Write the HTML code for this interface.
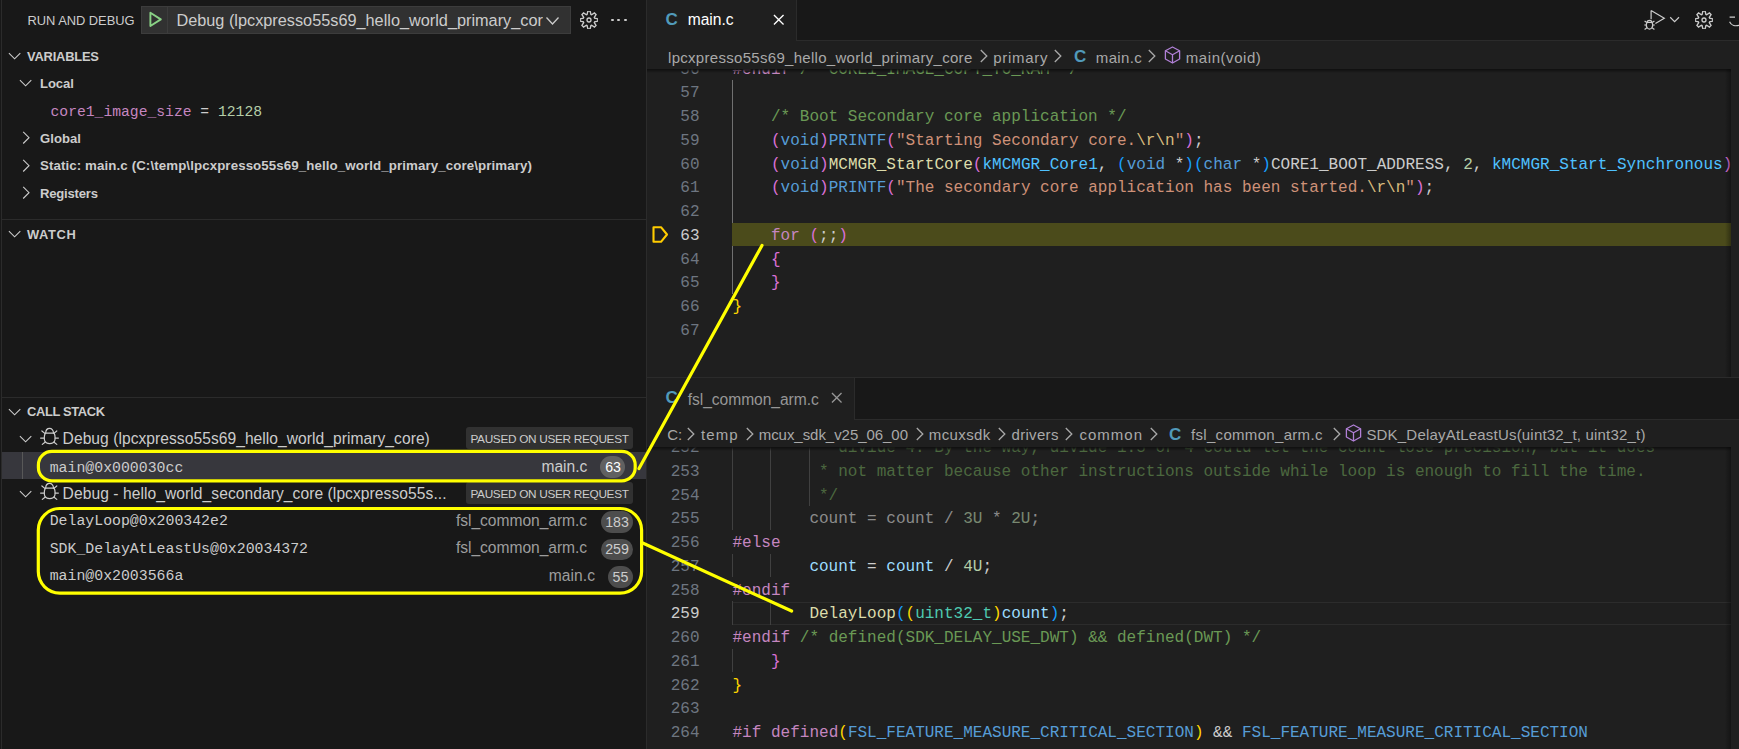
<!DOCTYPE html><html><head><meta charset="utf-8"><style>
*{margin:0;padding:0;box-sizing:border-box}
html,body{width:1739px;height:749px;overflow:hidden;background:#181818}
body{position:relative;font-family:"Liberation Sans",sans-serif;color:#cccccc}
.a{position:absolute;white-space:pre;line-height:normal}
.mono{font-family:"Liberation Mono",monospace}
.hb{font-weight:bold;font-size:12.6px}
.sc{font-weight:bold;font-size:12.6px}
.row{font-size:15.2px;letter-spacing:0.25px}
.code{position:absolute;left:0;font-family:"Liberation Mono",monospace;font-size:16.03px;line-height:23.75px;white-space:pre;color:#cccccc}
.c{color:#6a9955}.k{color:#c586c0}.s{color:#569cd6}.f{color:#dcdcaa}.st{color:#ce9178}.e{color:#d7ba7d}
.v{color:#9cdcfe}.en{color:#4fc1ff}.n{color:#b5cea8}.t{color:#4ec9b0}.b1{color:#ffd700}.b2{color:#da70d6}.b3{color:#179fff}.o{color:#d4d4d4}
.ln{position:absolute;left:0;width:52px;text-align:right;font-family:"Liberation Mono",monospace;font-size:16.03px;line-height:23.75px;color:#6e7681}
.bc{position:absolute;font-size:15.4px;color:#a9a9a9;white-space:pre;line-height:normal}
.badge{position:absolute;background:#313131;border-radius:3px;font-size:12.6px;color:#cccccc;text-align:center}
.cnt{position:absolute;background:#4d4d4d;border-radius:11px;font-size:14px;color:#cccccc;text-align:center}
.fn{position:absolute;font-size:15.2px;color:#9d9d9d;white-space:pre;line-height:normal}
.ig{position:absolute;width:1px;background:#404040}
</style></head><body>
<div class="a" style="left:1px;top:0;width:1px;height:749px;background:#2b2b2b"></div>
<div class="a" style="left:27.50px;top:13.03px;font-size:12.9px;letter-spacing:-0.033px;">RUN AND DEBUG</div>
<div class="a" style="left:141px;top:6px;width:430px;height:28px;background:#313131;border:1px solid #3c3c3c"></div>
<div class="a" style="left:167px;top:7px;width:1px;height:26px;background:#3c3c3c"></div>
<svg class="a" style="left:0;top:0" width="200" height="40" viewBox="0 0 200 40"><path d="M150.4 12.8 L160.8 19.4 L150.4 26 Z" fill="none" stroke="#89d185" stroke-width="1.9" stroke-linejoin="round"/></svg>
<div class="a" style="left:141px;top:0;width:402px;height:40px;overflow:hidden"><div class="a" style="left:35.40px;top:10.90px;font-size:16.3px;">Debug (lpcxpresso55s69_hello_world_primary_core)</div></div>
<svg class="a" style="left:545px;top:16px" width="16" height="10" viewBox="0 0 16 10"><path d="M1.5 1.5 L7.5 8 L13.5 1.5" fill="none" stroke="#cccccc" stroke-width="1.3"/></svg>
<svg class="a" style="left:579.6px;top:10.9px" width="18" height="18" viewBox="0 0 18 18"><path d="M7.09,3.42 L7.85,0.18 L10.15,0.18 L10.91,3.42 L11.59,3.70 L14.42,1.94 L16.06,3.58 L14.30,6.41 L14.58,7.09 L17.82,7.85 L17.82,10.15 L14.58,10.91 L14.30,11.59 L16.06,14.42 L14.42,16.06 L11.59,14.30 L10.91,14.58 L10.15,17.82 L7.85,17.82 L7.09,14.58 L6.41,14.30 L3.58,16.06 L1.94,14.42 L3.70,11.59 L3.42,10.91 L0.18,10.15 L0.18,7.85 L3.42,7.09 L3.70,6.41 L1.94,3.58 L3.58,1.94 L6.41,3.70 Z" fill="none" stroke="#cccccc" stroke-width="1.35" stroke-linejoin="miter"/><circle cx="9" cy="9" r="2.0" fill="none" stroke="#cccccc" stroke-width="1.3"/></svg>
<div class="a" style="left:610.8px;top:18.5px;width:2.8px;height:2.8px;border-radius:1.5px;background:#cccccc"></div>
<div class="a" style="left:617.3px;top:18.5px;width:2.8px;height:2.8px;border-radius:1.5px;background:#cccccc"></div>
<div class="a" style="left:623.8px;top:18.5px;width:2.8px;height:2.8px;border-radius:1.5px;background:#cccccc"></div>
<svg class="a" style="left:8px;top:52px" width="14" height="8" viewBox="0 0 14 8"><path d="M0.9 1.1 L6.6 6.8 L12.3 1.1" fill="none" stroke="#cccccc" stroke-width="1.1"/></svg>
<div class="a" style="left:27.00px;top:49.13px;font-size:12.9px;font-weight:bold;letter-spacing:-0.200px;">VARIABLES</div>
<svg class="a" style="left:19px;top:79px" width="14" height="8" viewBox="0 0 14 8"><path d="M0.9 1.1 L6.6 6.8 L12.3 1.1" fill="none" stroke="#cccccc" stroke-width="1.1"/></svg>
<div class="a" style="left:40.00px;top:75.95px;font-size:13.1px;font-weight:bold;letter-spacing:-0.100px;">Local</div>
<div class="a mono" style="left:50.5px;top:104px;font-size:14.7px"><span style="color:#c586c0">core1_image_size</span> = <span style="color:#b5cea8">12128</span></div>
<svg class="a" style="left:22px;top:131px" width="8" height="14" viewBox="0 0 8 14"><path d="M1.2 0.9 L7 6.7 L1.2 12.5" fill="none" stroke="#cccccc" stroke-width="1.1"/></svg>
<div class="a" style="left:40.00px;top:130.95px;font-size:13.1px;font-weight:bold;letter-spacing:0.040px;">Global</div>
<svg class="a" style="left:22px;top:159px" width="8" height="14" viewBox="0 0 8 14"><path d="M1.2 0.9 L7 6.7 L1.2 12.5" fill="none" stroke="#cccccc" stroke-width="1.1"/></svg>
<div class="a" style="left:40.00px;top:158.46px;font-size:13.3px;font-weight:bold;letter-spacing:0.099px;">Static: main.c (C:\temp\lpcxpresso55s69_hello_world_primary_core\primary)</div>
<svg class="a" style="left:22px;top:186px" width="8" height="14" viewBox="0 0 8 14"><path d="M1.2 0.9 L7 6.7 L1.2 12.5" fill="none" stroke="#cccccc" stroke-width="1.1"/></svg>
<div class="a" style="left:40.00px;top:185.65px;font-size:13.1px;font-weight:bold;letter-spacing:-0.213px;">Registers</div>
<div class="a" style="left:2px;top:219px;width:644px;height:1px;background:#2b2b2b"></div>
<svg class="a" style="left:8px;top:230px" width="14" height="8" viewBox="0 0 14 8"><path d="M0.9 1.1 L6.6 6.8 L12.3 1.1" fill="none" stroke="#cccccc" stroke-width="1.1"/></svg>
<div class="a" style="left:27.00px;top:226.93px;font-size:12.9px;font-weight:bold;letter-spacing:0.600px;">WATCH</div>
<div class="a" style="left:2px;top:397px;width:644px;height:1px;background:#2b2b2b"></div>
<svg class="a" style="left:8px;top:408px" width="14" height="8" viewBox="0 0 14 8"><path d="M0.9 1.1 L6.6 6.8 L12.3 1.1" fill="none" stroke="#cccccc" stroke-width="1.1"/></svg>
<div class="a" style="left:27.00px;top:403.53px;font-size:12.9px;font-weight:bold;letter-spacing:-0.356px;">CALL STACK</div>
<svg class="a" style="left:19px;top:435px" width="14" height="8" viewBox="0 0 14 8"><path d="M0.9 1.1 L6.6 6.8 L12.3 1.1" fill="none" stroke="#cccccc" stroke-width="1.1"/></svg>
<svg class="a" style="left:36px;top:424px" width="28" height="24" viewBox="0 0 28 24"><g fill="none" stroke="#cccccc" stroke-width="1.2" stroke-linecap="round"><path d="M9.7 9.1 C9.7 2.9 17.5 2.9 17.5 9.1"/><path d="M9.3 9.1 L18.1 9.1 C19.4 11.5 19.4 16 18.3 17.6 C17 20.3 10.4 20.3 9.1 17.6 C8 16 8 11.5 9.3 9.1 Z"/><path d="M5.9 7 L8.8 9.4 M20.8 7 L17.9 9.4 M4.6 14.1 L8.3 14.1 M19.1 14.1 L22.4 14.1 M6.3 20.4 L9.0 18.2 M20.8 20.4 L18.1 18.2"/></g></svg>
<div class="a" style="left:62.60px;top:429.55px;font-size:15.6px;letter-spacing:0.049px;">Debug (lpcxpresso55s69_hello_world_primary_core)</div>
<div class="badge" style="left:466px;top:427px;width:167px;height:22px"></div>
<div class="a" style="left:470.40px;top:432.14px;font-size:11.8px;letter-spacing:-0.305px;">PAUSED ON USER REQUEST</div>
<div class="a" style="left:2px;top:452px;width:644px;height:27.2px;background:#37373d"></div>
<div class="a" style="left:22px;top:452px;width:1px;height:27.2px;background:#585858"></div>
<div class="a mono" style="left:49.7px;top:459.5px;font-size:14.85px">main@0x000030cc</div>
<div class="a" style="left:541.50px;top:457.75px;font-size:15.6px;letter-spacing:-0.040px;color:#cccccc;">main.c</div>
<div class="cnt" style="left:600px;top:455.6px;width:25px;height:22.4px;background:#616161"></div>
<div class="a" style="left:605.2px;top:458.7px;font-size:14.2px;color:#ffffff">63</div>
<svg class="a" style="left:19px;top:490px" width="14" height="8" viewBox="0 0 14 8"><path d="M0.9 1.1 L6.6 6.8 L12.3 1.1" fill="none" stroke="#cccccc" stroke-width="1.1"/></svg>
<svg class="a" style="left:36px;top:479px" width="28" height="24" viewBox="0 0 28 24"><g fill="none" stroke="#cccccc" stroke-width="1.2" stroke-linecap="round"><path d="M9.7 9.1 C9.7 2.9 17.5 2.9 17.5 9.1"/><path d="M9.3 9.1 L18.1 9.1 C19.4 11.5 19.4 16 18.3 17.6 C17 20.3 10.4 20.3 9.1 17.6 C8 16 8 11.5 9.3 9.1 Z"/><path d="M5.9 7 L8.8 9.4 M20.8 7 L17.9 9.4 M4.6 14.1 L8.3 14.1 M19.1 14.1 L22.4 14.1 M6.3 20.4 L9.0 18.2 M20.8 20.4 L18.1 18.2"/></g></svg>
<div class="a" style="left:62.60px;top:484.55px;font-size:15.6px;letter-spacing:0.067px;">Debug - hello_world_secondary_core (lpcxpresso55s...</div>
<div class="badge" style="left:466px;top:482px;width:167px;height:22px"></div>
<div class="a" style="left:470.40px;top:487.14px;font-size:11.8px;letter-spacing:-0.305px;">PAUSED ON USER REQUEST</div>
<div class="a mono" style="left:49.7px;top:513.4px;font-size:14.85px">DelayLoop@0x200342e2</div>
<div class="a" style="left:456.00px;top:511.65px;font-size:15.6px;letter-spacing:-0.040px;color:#9d9d9d;">fsl_common_arm.c</div>
<div class="cnt" style="left:601px;top:511.3px;width:32px;height:21.5px"></div>
<div class="a" style="left:601px;width:32px;text-align:center;top:513.8px;font-size:14.2px">183</div>
<div class="a mono" style="left:49.7px;top:540.9px;font-size:14.85px">SDK_DelayAtLeastUs@0x20034372</div>
<div class="a" style="left:456.00px;top:539.15px;font-size:15.6px;letter-spacing:-0.040px;color:#9d9d9d;">fsl_common_arm.c</div>
<div class="cnt" style="left:601px;top:538.8px;width:32px;height:21.5px"></div>
<div class="a" style="left:601px;width:32px;text-align:center;top:541.3px;font-size:14.2px">259</div>
<div class="a mono" style="left:49.7px;top:568.4px;font-size:14.85px">main@0x2003566a</div>
<div class="a" style="left:548.80px;top:566.65px;font-size:15.6px;letter-spacing:0.060px;color:#9d9d9d;">main.c</div>
<div class="cnt" style="left:608px;top:566.3px;width:25px;height:21.5px"></div>
<div class="a" style="left:608px;width:25px;text-align:center;top:568.8px;font-size:14.2px">55</div>
<div class="a" style="left:646px;top:0;width:1px;height:749px;background:#2b2b2b"></div>
<div class="a" style="left:647px;top:0;width:1092px;height:749px;background:#1f1f1f"></div>
<div class="a" style="left:647px;top:0px;width:1092px;height:40px;background:#181818"></div>
<div class="a" style="left:647px;top:40px;width:1092px;height:1px;background:#2b2b2b"></div>
<div class="a" style="left:647px;top:0px;width:149px;height:41px;background:#1f1f1f"></div>
<div class="a" style="left:796px;top:0px;width:1px;height:40px;background:#2b2b2b"></div>
<div class="a" style="left:665.5px;top:9.5px;font-size:17px;font-weight:bold;color:#519aba">C</div>
<div class="a" style="left:687.70px;top:11.45px;font-size:15.6px;color:#ffffff;">main.c</div>
<svg class="a" style="left:773px;top:14px" width="11.5" height="11.5" viewBox="0 0 12 12"><path d="M1 1 L11 11 M11 1 L1 11" fill="none" stroke="#ffffff" stroke-width="1.4"/></svg>
<div class="a" style="left:732px;top:222.65px;width:999px;height:23.75px;background:#4b4b1b"></div>
<div class="ig" style="left:732px;top:80.15px;height:142.50px;background:#707070"></div>
<div class="ig" style="left:732px;top:246.40px;height:47.50px;background:#707070"></div>
<div class="a" style="left:647px;top:69px;width:1084px;height:308px;overflow:hidden">
<div class="ln" style="top:-10.40px;width:52.5px;color:#6e7681">56</div>
<div class="code" style="left:85.5px;top:-10.40px"><span class="k">#endif</span> <span class="c">/* CORE1_IMAGE_COPY_TO_RAM */</span></div>
<div class="ln" style="top:13.35px;width:52.5px;color:#6e7681">57</div>
<div class="code" style="left:85.5px;top:13.35px"></div>
<div class="ln" style="top:37.10px;width:52.5px;color:#6e7681">58</div>
<div class="code" style="left:85.5px;top:37.10px">    <span class="c">/* Boot Secondary core application */</span></div>
<div class="ln" style="top:60.85px;width:52.5px;color:#6e7681">59</div>
<div class="code" style="left:85.5px;top:60.85px">    <span class="b2">(</span><span class="s">void</span><span class="b2">)</span><span class="s">PRINTF</span><span class="b2">(</span><span class="st">"Starting Secondary core.</span><span class="e">\r\n</span><span class="st">"</span><span class="b2">)</span>;</div>
<div class="ln" style="top:84.60px;width:52.5px;color:#6e7681">60</div>
<div class="code" style="left:85.5px;top:84.60px">    <span class="b2">(</span><span class="s">void</span><span class="b2">)</span><span class="f">MCMGR_StartCore</span><span class="b2">(</span><span class="en">kMCMGR_Core1</span>, <span class="b3">(</span><span class="s">void</span> *<span class="b3">)</span><span class="b3">(</span><span class="s">char</span> *<span class="b3">)</span>CORE1_BOOT_ADDRESS, <span class="n">2</span>, <span class="en">kMCMGR_Start_Synchronous</span><span class="b2">)</span>;</div>
<div class="ln" style="top:108.35px;width:52.5px;color:#6e7681">61</div>
<div class="code" style="left:85.5px;top:108.35px">    <span class="b2">(</span><span class="s">void</span><span class="b2">)</span><span class="s">PRINTF</span><span class="b2">(</span><span class="st">"The secondary core application has been started.</span><span class="e">\r\n</span><span class="st">"</span><span class="b2">)</span>;</div>
<div class="ln" style="top:132.10px;width:52.5px;color:#6e7681">62</div>
<div class="code" style="left:85.5px;top:132.10px"></div>
<div class="ln" style="top:155.85px;width:52.5px;color:#cccccc">63</div>
<div class="code" style="left:85.5px;top:155.85px">    <span class="k">for</span> <span class="b2">(</span>;;<span class="b2">)</span></div>
<div class="ln" style="top:179.60px;width:52.5px;color:#6e7681">64</div>
<div class="code" style="left:85.5px;top:179.60px">    <span class="b2">{</span></div>
<div class="ln" style="top:203.35px;width:52.5px;color:#6e7681">65</div>
<div class="code" style="left:85.5px;top:203.35px">    <span class="b2">}</span></div>
<div class="ln" style="top:227.10px;width:52.5px;color:#6e7681">66</div>
<div class="code" style="left:85.5px;top:227.10px"><span class="b1">}</span></div>
<div class="ln" style="top:250.85px;width:52.5px;color:#6e7681">67</div>
<div class="code" style="left:85.5px;top:250.85px"></div>
</div>
<svg class="a" style="left:651px;top:224.5px" width="19" height="19" viewBox="0 0 19 19"><path d="M2.5 2.2 L10 2.2 L16 9.5 L10 16.8 L2.5 16.8 Z" fill="none" stroke="#ffcc00" stroke-width="2.1" stroke-linejoin="round"/></svg>
<div class="a" style="left:668.00px;top:48.50px;font-size:15.0px;letter-spacing:0.297px;color:#a9a9a9;">lpcxpresso55s69_hello_world_primary_core</div>
<svg class="a" style="left:979.5px;top:49px" width="8" height="14" viewBox="0 0 8 14"><path d="M0.8 1 L6.8 7 L0.8 13" fill="none" stroke="#a9a9a9" stroke-width="1.3"/></svg>
<div class="a" style="left:993.30px;top:48.50px;font-size:15.0px;letter-spacing:0.700px;color:#a9a9a9;">primary</div>
<svg class="a" style="left:1054px;top:49px" width="8" height="14" viewBox="0 0 8 14"><path d="M0.8 1 L6.8 7 L0.8 13" fill="none" stroke="#a9a9a9" stroke-width="1.3"/></svg>
<div class="a" style="left:1074px;top:46.5px;font-size:17px;font-weight:bold;color:#519aba">C</div>
<div class="a" style="left:1095.80px;top:48.50px;font-size:15.0px;letter-spacing:0.340px;color:#a9a9a9;">main.c</div>
<svg class="a" style="left:1148.3px;top:49px" width="8" height="14" viewBox="0 0 8 14"><path d="M0.8 1 L6.8 7 L0.8 13" fill="none" stroke="#a9a9a9" stroke-width="1.3"/></svg>
<svg class="a" style="left:1163.5px;top:45.5px" width="17" height="18" viewBox="0 0 17 18"><g fill="none" stroke="#b180d7" stroke-width="1.3" stroke-linejoin="round"><path d="M8.5 1 L15.6 4.8 L15.6 13 L8.5 17 L1.4 13 L1.4 4.8 Z"/><path d="M1.4 4.8 L8.5 8.8 L15.6 4.8 M8.5 8.8 L8.5 17"/></g></svg>
<div class="a" style="left:1185.80px;top:48.50px;font-size:15.0px;letter-spacing:0.556px;color:#a9a9a9;">main(void)</div>
<div class="a" style="left:647px;top:69px;width:1084px;height:4px;background:linear-gradient(#0f0f0f,rgba(31,31,31,0))"></div>
<div class="a" style="left:647px;top:377px;width:1092px;height:1px;background:#2b2b2b"></div>
<div class="a" style="left:647px;top:378px;width:1092px;height:41px;background:#181818"></div>
<div class="a" style="left:647px;top:419px;width:1092px;height:1px;background:#2b2b2b"></div>
<div class="a" style="left:647px;top:378px;width:207px;height:42px;background:#1f1f1f"></div>
<div class="a" style="left:854px;top:378px;width:1px;height:41px;background:#2b2b2b"></div>
<div class="a" style="left:665.5px;top:387.5px;font-size:17px;font-weight:bold;color:#519aba">C</div>
<div class="a" style="left:687.70px;top:391.05px;font-size:15.6px;letter-spacing:-0.040px;color:#969696;">fsl_common_arm.c</div>
<svg class="a" style="left:830.5px;top:392px" width="11.5" height="11.5" viewBox="0 0 12 12"><path d="M1 1 L11 11 M11 1 L1 11" fill="none" stroke="#969696" stroke-width="1.4"/></svg>
<div class="a" style="left:732px;top:602.1px;width:999px;height:22.6px;border-top:1.4px solid #2c2c2c;border-bottom:1.4px solid #2c2c2c"></div>
<div class="ig" style="left:732px;top:447px;height:82.90px"></div>
<div class="ig" style="left:770px;top:447px;height:82.90px"></div>
<div class="ig" style="left:809px;top:447px;height:59.15px"></div>
<div class="ig" style="left:732px;top:553.65px;height:23.75px"></div>
<div class="ig" style="left:770px;top:553.65px;height:23.75px"></div>
<div class="ig" style="left:732px;top:601.15px;height:23.75px"></div>
<div class="ig" style="left:770px;top:601.15px;height:23.75px"></div>
<div class="ig" style="left:732px;top:648.65px;height:23.75px"></div>
<div class="a" style="left:647px;top:447px;width:1084px;height:302px;overflow:hidden">
<div class="ln" style="top:-10.00px;width:52.5px;color:#6e7681">252</div>
<div class="code" style="left:85.5px;top:-10.00px"><span style="opacity:0.6">         <span class="c">* divide 4. By the way, divide 1.5 or 4 could let the count lose precision, but it does</span></span></div>
<div class="ln" style="top:13.75px;width:52.5px;color:#6e7681">253</div>
<div class="code" style="left:85.5px;top:13.75px"><span style="opacity:0.6">         <span class="c">* not matter because other instructions outside while loop is enough to fill the time.</span></span></div>
<div class="ln" style="top:37.50px;width:52.5px;color:#6e7681">254</div>
<div class="code" style="left:85.5px;top:37.50px"><span style="opacity:0.6">         <span class="c">*/</span></span></div>
<div class="ln" style="top:61.25px;width:52.5px;color:#6e7681">255</div>
<div class="code" style="left:85.5px;top:61.25px"><span style="opacity:0.6">        <span class="o">count = count / </span><span class="n">3U</span><span class="o"> * </span><span class="n">2U</span><span class="o">;</span></span></div>
<div class="ln" style="top:85.00px;width:52.5px;color:#6e7681">256</div>
<div class="code" style="left:85.5px;top:85.00px"><span class="k">#else</span></div>
<div class="ln" style="top:108.75px;width:52.5px;color:#6e7681">257</div>
<div class="code" style="left:85.5px;top:108.75px">        <span class="v">count</span> = <span class="v">count</span> / <span class="n">4U</span>;</div>
<div class="ln" style="top:132.50px;width:52.5px;color:#6e7681">258</div>
<div class="code" style="left:85.5px;top:132.50px"><span class="k">#endif</span></div>
<div class="ln" style="top:156.25px;width:52.5px;color:#cccccc">259</div>
<div class="code" style="left:85.5px;top:156.25px">        <span class="f">DelayLoop</span><span class="b3">(</span><span class="b1">(</span><span class="t">uint32_t</span><span class="b1">)</span><span class="v">count</span><span class="b3">)</span>;</div>
<div class="ln" style="top:180.00px;width:52.5px;color:#6e7681">260</div>
<div class="code" style="left:85.5px;top:180.00px"><span class="k">#endif</span> <span class="c">/* defined(SDK_DELAY_USE_DWT) &amp;&amp; defined(DWT) */</span></div>
<div class="ln" style="top:203.75px;width:52.5px;color:#6e7681">261</div>
<div class="code" style="left:85.5px;top:203.75px">    <span class="b2">}</span></div>
<div class="ln" style="top:227.50px;width:52.5px;color:#6e7681">262</div>
<div class="code" style="left:85.5px;top:227.50px"><span class="b1">}</span></div>
<div class="ln" style="top:251.25px;width:52.5px;color:#6e7681">263</div>
<div class="code" style="left:85.5px;top:251.25px"></div>
<div class="ln" style="top:275.00px;width:52.5px;color:#6e7681">264</div>
<div class="code" style="left:85.5px;top:275.00px"><span class="k">#if</span> <span class="k">defined</span><span class="b1">(</span><span class="s">FSL_FEATURE_MEASURE_CRITICAL_SECTION</span><span class="b1">)</span> &amp;&amp; <span class="s">FSL_FEATURE_MEASURE_CRITICAL_SECTION</span></div>
<div class="ln" style="top:298.75px;width:52.5px;color:#6e7681">265</div>
<div class="code" style="left:85.5px;top:298.75px"><span class="c">/* Calculate the critical section time */</span></div>
</div>
<div class="a" style="left:667.20px;top:425.50px;font-size:15.0px;color:#a9a9a9;">C:</div>
<svg class="a" style="left:687.4px;top:427px" width="8" height="14" viewBox="0 0 8 14"><path d="M0.8 1 L6.8 7 L0.8 13" fill="none" stroke="#a9a9a9" stroke-width="1.3"/></svg>
<div class="a" style="left:701.00px;top:425.50px;font-size:15.0px;letter-spacing:1.067px;color:#a9a9a9;">temp</div>
<svg class="a" style="left:745.5px;top:427px" width="8" height="14" viewBox="0 0 8 14"><path d="M0.8 1 L6.8 7 L0.8 13" fill="none" stroke="#a9a9a9" stroke-width="1.3"/></svg>
<div class="a" style="left:758.70px;top:425.50px;font-size:15.0px;letter-spacing:-0.047px;color:#a9a9a9;">mcux_sdk_v25_06_00</div>
<svg class="a" style="left:915.5px;top:427px" width="8" height="14" viewBox="0 0 8 14"><path d="M0.8 1 L6.8 7 L0.8 13" fill="none" stroke="#a9a9a9" stroke-width="1.3"/></svg>
<div class="a" style="left:928.80px;top:425.50px;font-size:15.0px;letter-spacing:0.383px;color:#a9a9a9;">mcuxsdk</div>
<svg class="a" style="left:998.3px;top:427px" width="8" height="14" viewBox="0 0 8 14"><path d="M0.8 1 L6.8 7 L0.8 13" fill="none" stroke="#a9a9a9" stroke-width="1.3"/></svg>
<div class="a" style="left:1011.50px;top:425.50px;font-size:15.0px;letter-spacing:0.317px;color:#a9a9a9;">drivers</div>
<svg class="a" style="left:1065.3px;top:427px" width="8" height="14" viewBox="0 0 8 14"><path d="M0.8 1 L6.8 7 L0.8 13" fill="none" stroke="#a9a9a9" stroke-width="1.3"/></svg>
<div class="a" style="left:1079.50px;top:425.50px;font-size:15.0px;letter-spacing:1.000px;color:#a9a9a9;">common</div>
<svg class="a" style="left:1149.5px;top:427px" width="8" height="14" viewBox="0 0 8 14"><path d="M0.8 1 L6.8 7 L0.8 13" fill="none" stroke="#a9a9a9" stroke-width="1.3"/></svg>
<div class="a" style="left:1169px;top:424.5px;font-size:17px;font-weight:bold;color:#519aba">C</div>
<div class="a" style="left:1191.00px;top:425.50px;font-size:15.0px;letter-spacing:0.313px;color:#a9a9a9;">fsl_common_arm.c</div>
<svg class="a" style="left:1332.5px;top:427px" width="8" height="14" viewBox="0 0 8 14"><path d="M0.8 1 L6.8 7 L0.8 13" fill="none" stroke="#a9a9a9" stroke-width="1.3"/></svg>
<svg class="a" style="left:1344.5px;top:423.5px" width="17" height="18" viewBox="0 0 17 18"><g fill="none" stroke="#b180d7" stroke-width="1.3" stroke-linejoin="round"><path d="M8.5 1 L15.6 4.8 L15.6 13 L8.5 17 L1.4 13 L1.4 4.8 Z"/><path d="M1.4 4.8 L8.5 8.8 L15.6 4.8 M8.5 8.8 L8.5 17"/></g></svg>
<div class="a" style="left:1366.40px;top:425.50px;font-size:15.0px;letter-spacing:0.195px;color:#a9a9a9;">SDK_DelayAtLeastUs(uint32_t, uint32_t)</div>
<div class="a" style="left:647px;top:447px;width:1084px;height:4px;background:linear-gradient(#0f0f0f,rgba(31,31,31,0))"></div>
<div class="a" style="left:1725px;top:69px;width:6px;height:308px;background:linear-gradient(90deg,rgba(0,0,0,0),rgba(0,0,0,0.35))"></div>
<div class="a" style="left:1725px;top:447px;width:6px;height:302px;background:linear-gradient(90deg,rgba(0,0,0,0),rgba(0,0,0,0.35))"></div>
<svg class="a" style="left:1640px;top:0px" width="99" height="40" viewBox="0 0 99 40"><g fill="none" stroke="#cccccc" stroke-width="1.2"><path d="M11.1 10.6 L24.3 18.2 L15.4 23.6 M11.1 10.6 L11.1 19.2"/><path d="M7.3 22.3 C7.3 19.8 11.7 19.8 11.7 22.3"/><path d="M7 22.3 L12 22.3 C12.8 24 12.8 26.5 12 27.6 C11 29.6 8 29.6 7 27.6 C6.2 26.5 6.2 24 7 22.3 Z"/><path d="M4.6 21 L6.8 22.6 M14.4 21 L12.2 22.6 M4.3 25 L6.5 25 M12.5 25 L14.8 25 M4.6 29.5 L6.9 27.8 M14.4 29.5 L12.1 27.8"/><path d="M30.2 17.3 L34.6 21.6 L39 17.3"/><path d="M89.6 17.2 L95 17.2 M89.6 21.8 C91 25.5 95.5 26.3 99.5 25.2"/></g></svg>
<svg class="a" style="left:1694.5px;top:11px" width="18" height="18" viewBox="0 0 18 18"><path d="M7.09,3.42 L7.85,0.18 L10.15,0.18 L10.91,3.42 L11.59,3.70 L14.42,1.94 L16.06,3.58 L14.30,6.41 L14.58,7.09 L17.82,7.85 L17.82,10.15 L14.58,10.91 L14.30,11.59 L16.06,14.42 L14.42,16.06 L11.59,14.30 L10.91,14.58 L10.15,17.82 L7.85,17.82 L7.09,14.58 L6.41,14.30 L3.58,16.06 L1.94,14.42 L3.70,11.59 L3.42,10.91 L0.18,10.15 L0.18,7.85 L3.42,7.09 L3.70,6.41 L1.94,3.58 L3.58,1.94 L6.41,3.70 Z" fill="none" stroke="#cccccc" stroke-width="1.35" stroke-linejoin="miter"/><circle cx="9" cy="9" r="2.0" fill="none" stroke="#cccccc" stroke-width="1.3"/></svg>
<svg class="a" style="left:0;top:0" width="1739" height="749" viewBox="0 0 1739 749"><g fill="none" stroke="#ffff00" stroke-width="3.2" stroke-linejoin="round" stroke-linecap="round"><rect x="38.4" y="451.4" width="596.8" height="29.5" rx="13.5" ry="13.5"/><rect x="38.3" y="508.5" width="603.3" height="84.6" rx="21.5" ry="21.5"/><path d="M639 468.5 L762 245.4"/><path d="M642.7 543 L791.6 611"/></g></svg>
</body></html>
